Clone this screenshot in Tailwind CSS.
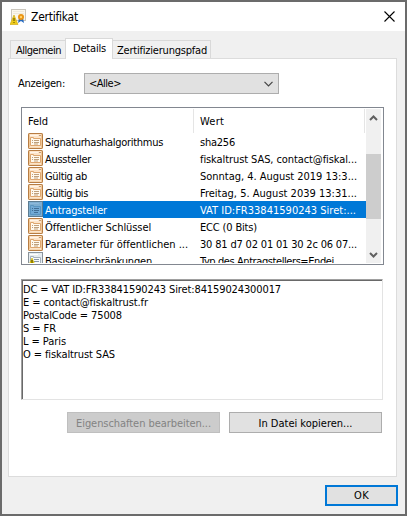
<!DOCTYPE html>
<html lang="de">
<head>
<meta charset="utf-8">
<title>Zertifikat</title>
<script src="https://cdn.jsdelivr.net/npm/@tailwindcss/browser@4"></script>
</head>
<body class="w-[407px] h-[516px] overflow-hidden bg-[#6b6b6b] p-[2px] text-[11px] text-black whitespace-nowrap [font-family:'DejaVu_Sans_Condensed','DejaVu_Sans',sans-serif] [font-stretch:75%]">
<svg class="hidden">
  <symbol id="field" viewBox="0 0 15 16">
    <rect x=".5" y=".5" width="14" height="15" rx=".6" fill="#fce4c9" stroke="#b87d43"/>
    <path d="M1.5 1v13.500M13.500 1v14" stroke="#f0c796"/>
    <path d="M2 2.500h8" stroke="#fff4e8"/><path d="M12 2v1" stroke="#8a5420"/>
    <path d="M2.500 4.500h3v1h7v7h-10z" fill="#fff9ee" stroke="#dda66f"/>
    <path d="M4 7.500h1M6 7.500h5M4 9.500h1M6 9.500h5M6 11h4" stroke="#bfa07c"/>
    <path d="M2 14.500h10" stroke="#f6d8b4"/>
  </symbol>
  <symbol id="fieldsel" viewBox="0 0 15 16">
    <rect x=".5" y=".5" width="14" height="15" fill="#7eaed0" stroke="#5c7c92"/>
    <path d="M2 2.500h9" stroke="#8db9dc"/><path d="M2.500 4.500h3v1h7v8h-10z" fill="#72aad5" stroke="#5a95c0"/>
    <path d="M4 7.500h1M6 7.500h5M4 9.500h1M6 9.500h5M6 11.500h4" stroke="#416f96"/>
  </symbol>
  <symbol id="critical" viewBox="0 0 15 16">
    <rect x=".5" y=".5" width="14" height="15" fill="#e6ecf0" stroke="#89939b"/>
    <path d="M2 2.500h8" stroke="#fff"/><path d="M2.500 4.500h3v1h7v8h-10z" fill="#f7fafc" stroke="#a6b1bb"/>
    <path d="M6 7.500h5M6 9.500h5" stroke="#8797a7"/>
    <path d="M4 6 8 15H0z" fill="#f5d800" stroke="#c6a900" stroke-width=".6"/><path d="M4 8v4" stroke="#332b00"/>
  </symbol>
</svg>
<main class="w-[403px] h-[512px] bg-[#f0f0f0] flex flex-col">
  <header class="h-[29px] bg-white flex items-center pl-2 pr-[10px]">
    <svg class="w-4 h-4" viewBox="0 0 16 16">
      <rect x="1.500" y=".5" width="14" height="11" fill="#faf7ec" stroke="#c9c5bc"/>
      <path d="M3 2.500h11M3 4.500h11" stroke="#eee9dc"/>
      <path d="m9 9-1 5 3-2 3 2-1-5z" fill="#2469be"/>
      <circle cx="11" cy="8" r="3" fill="#eb9413"/><circle cx="11" cy="8" r="1.200" fill="#ffd36b"/>
      <path d="M4 6 8 15.500H0z" fill="#eecb19" stroke="#cda408" stroke-width=".6"/><path d="M4 9v3M4 13v1" stroke="#554400"/>
    </svg>
    <h1 class="ml-[5px] text-[12px] leading-4"><span data-w="47">Zertifikat</span></h1>
    <svg class="ml-auto w-[11px] h-[11px]" viewBox="0 0 11 11"><path d="m.5.5 10 10m0-10-10 10" stroke="#000" stroke-width="1.100"/></svg>
  </header>
  <nav class="h-[28px] pl-2 flex items-end relative z-10 -mb-px">
    <div class="w-[56px] h-[18px] mb-px border border-b-0 border-[#d9d9d9] pl-[5px] leading-[19px]"><span data-w="45">Allgemein</span></div>
    <div class="w-[48px] h-[21px] -ml-px bg-white border border-b-0 border-[#d9d9d9] pl-[7px] leading-[20px]"><span data-w="33">Details</span></div>
    <div class="w-[98px] h-[18px] mb-px border border-b-0 border-l-0 border-[#d9d9d9] pl-[4px] leading-[19px]"><span data-w="90">Zertifizierungspfad</span></div>
  </nav>
  <section class="ml-[6px] w-[389px] h-[419px] bg-white border border-[#dcdcdc] pl-[12px] pt-[14px]">
    <div class="flex h-[21px] items-center">
      <div class="w-[66px] -ml-[3px] pt-[2px]"><span data-w="47">Anzeigen:</span></div>
      <div class="w-[195px] h-[21px] bg-[#e1e1e1] border border-[#adadad] flex items-center pl-1 pr-[5px]">
        <span class="pt-[2px]" data-w="32">&lt;Alle&gt;</span>
        <svg class="ml-auto w-[9px] h-[6px]" viewBox="0 0 9 6"><path d="m.5.8 4 4 4-4" fill="none" stroke="#444" stroke-width="1.200"/></svg>
      </div>
    </div>
    <div class="mt-[13px] w-[363px] h-[158px] border border-[#828790] flex pt-px pr-[2px] pb-px">
      <div class="w-[344px] h-[154px] overflow-hidden">
        <div class="h-[24px] flex items-center">
          <div class="w-[172px] h-full border-r border-[#e5e5e5] pl-[6px] leading-[26px]"><span data-w="20">Feld</span></div>
          <div class="w-[171px] h-full border-r border-[#e5e5e5] pl-[6px] leading-[26px]"><span data-w="24">Wert</span></div>
        </div>
        <div id="rows"></div>
      </div>
      <div class="w-[15px] h-[154px] bg-[#f0f0f0] flex flex-col items-center">
        <svg class="h-[45px] w-[15px] shrink-0" viewBox="0 0 15 45"><path d="m4 11 3.500-3.500L11 11" fill="none" stroke="#606060" stroke-width="2"/></svg>
        <div class="w-full h-[65px] shrink-0 bg-[#cdcdcd]"></div>
        <svg class="h-[44px] w-[15px] shrink-0" viewBox="0 0 15 44"><path d="m4 34 3.500 3.500L11 34" fill="none" stroke="#606060" stroke-width="2"/></svg>
      </div>
    </div>
    <div class="mt-[14px] w-[362px] h-[121px] border border-t-[#a0a0a0] border-l-[#a0a0a0] border-r-[#e3e3e3] border-b-[#e3e3e3]">
      <div class="h-full border-t border-l border-[#696969] leading-[13px] pt-[2px]">
        <div><span data-w="258">DC = VAT ID:FR33841590243 Siret:84159024300017</span></div>
        <div><span data-w="125">E = contact@fiskaltrust.fr</span></div>
        <div><span data-w="99">PostalCode = 75008</span></div>
        <div><span data-w="33">S = FR</span></div>
        <div><span data-w="43">L = Paris</span></div>
        <div><span data-w="92">O = fiskaltrust SAS</span></div>
      </div>
    </div>
    <div class="mt-[12px] pl-[46px] flex gap-[9px] text-center leading-[19px]">
      <button class="w-[153px] h-[21px] bg-[#cccccc] border border-[#bfbfbf] text-[#838383] pt-px"><span data-w="135">Eigenschaften bearbeiten...</span></button>
      <button class="w-[153px] h-[21px] bg-[#e1e1e1] border border-[#adadad] pt-px"><span data-w="94">In Datei kopieren...</span></button>
    </div>
  </section>
  <footer class="mt-[8px] pr-[7px] flex justify-end">
    <button class="w-[73px] h-[21px] bg-[#e1e1e1] border-2 border-[#0078d7] leading-[16px] pt-px"><span data-w="15">OK</span></button>
  </footer>
</main>
<script>
const rows = [
  ['field','Signaturhashalgorithmus',118,'sha256',35],
  ['field','Aussteller',46,'fiskaltrust SAS, contact@fiskal...',157],
  ['field','Gültig ab',42,'Sonntag, 4. August 2019 13:3...',157],
  ['field','Gültig bis',43,'Freitag, 5. August 2039 13:31...',157],
  ['fieldsel','Antragsteller',62,'VAT ID:FR33841590243 Siret:...',156],
  ['field','Öffentlicher Schlüssel',106,'ECC (0 Bits)',57],
  ['field','Parameter für öffentlichen ...',143,'30 81 d7 02 01 01 30 2c 06 07...',157],
  ['critical','Basiseinschränkungen',107,'Typ des Antragstellers=Endei...',142]
];
document.getElementById('rows').innerHTML = rows.map(([icon,a,aw,b,bw]) =>
  `<div class="flex h-[17px] pl-[6px]"><svg class="w-[15px] h-[16px] shrink-0"><use href="#${icon}"/></svg><div class="flex flex-1 leading-[20px] ${icon==='fieldsel'?'bg-[#0078d7] text-white':''}"><div class="w-[157px] pl-[2px]"><span data-w="${aw}">${a}</span></div><div><span data-w="${bw}">${b}</span></div></div></div>`).join('');
// Fit each label to its nominal dialog width.
function fit() {
  document.querySelectorAll('[data-w]').forEach(e => {
    e.style.letterSpacing = '0px';
    const w = e.getBoundingClientRect().width;
    e.style.letterSpacing = (e.dataset.w - w) / e.textContent.length + 'px';
  });
}
fit();
addEventListener('load', () => { fit(); document.fonts.ready.then(fit); });
</script>
</body>
</html>
